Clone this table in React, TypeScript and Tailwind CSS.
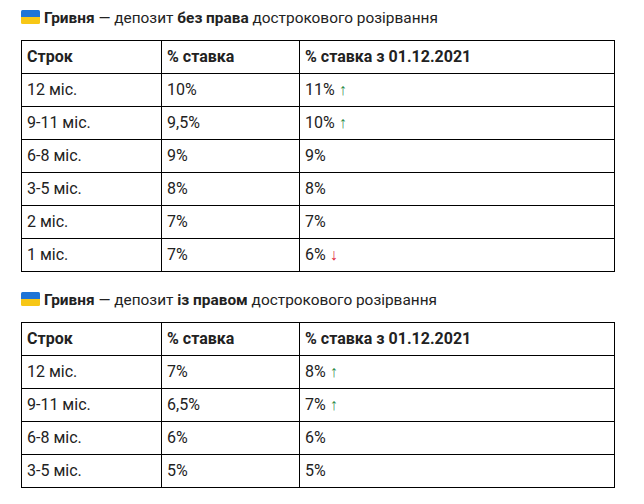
const up = <span className="text-[#2e8b4a]">↑</span>;
const down = <span className="text-[#e0203a]">↓</span>;

type Row = [string, string, React.ReactNode];

const noEarly: Row[] = [
  ["12 міс.", "10%", <>11% {up}</>],
  ["9-11 міс.", "9,5%", <>10% {up}</>],
  ["6-8 міс.", "9%", "9%"],
  ["3-5 міс.", "8%", "8%"],
  ["2 міс.", "7%", "7%"],
  ["1 міс.", "7%", <>6% {down}</>],
];

const withEarly: Row[] = [
  ["12 міс.", "7%", <>8% {up}</>],
  ["9-11 міс.", "6,5%", <>7% {up}</>],
  ["6-8 міс.", "6%", "6%"],
  ["3-5 міс.", "5%", "5%"],
];

function Flag() {
  return (
    <svg width="19" height="14" viewBox="0 0 19 14" className="inline-block mr-[4px] align-[-1px]">
      <rect x="0" y="0" width="19" height="7" rx="1.5" fill="#1f74d6" />
      <rect x="0" y="7" width="19" height="7" rx="1.5" fill="#f7c716" />
      <rect x="0" y="5" width="19" height="4" fill="#1f74d6" />
      <rect x="0" y="7" width="19" height="3" fill="#f7c716" />
    </svg>
  );
}

function RateTable({ rows }: { rows: Row[] }) {
  const cell = "border border-black h-[33px] px-[5px] py-0 align-middle";
  return (
    <table className="w-[594px] table-fixed border-collapse text-[16px]">
      <colgroup>
        <col className="w-[140px]" />
        <col className="w-[138px]" />
        <col />
      </colgroup>
      <thead>
        <tr>
          <th className={`${cell} text-left font-bold`}>Строк</th>
          <th className={`${cell} text-left font-bold`}>% ставка</th>
          <th className={`${cell} text-left font-bold`}>% ставка з 01.12.2021</th>
        </tr>
      </thead>
      <tbody>
        {rows.map((r, i) => (
          <tr key={i}>
            <td className={cell}>{r[0]}</td>
            <td className={cell}>{r[1]}</td>
            <td className={cell}>{r[2]}</td>
          </tr>
        ))}
      </tbody>
    </table>
  );
}

export default function App() {
  return (
    <div className="w-[644px] h-[504px] bg-white pt-[6px] px-[21px] text-[#222] font-['Roboto',sans-serif] overflow-hidden">
      <p className="text-[15.4px] leading-[25px] mb-[9px]">
        <Flag />
        <b>Гривня</b> — депозит <b>без права</b> дострокового розірвання
      </p>
      <RateTable rows={noEarly} />
      <p className="text-[15.4px] leading-[25px] mt-[16px] mb-[9px]">
        <Flag />
        <b>Гривня</b> — депозит <b>із правом</b> дострокового розірвання
      </p>
      <RateTable rows={withEarly} />
    </div>
  );
}
